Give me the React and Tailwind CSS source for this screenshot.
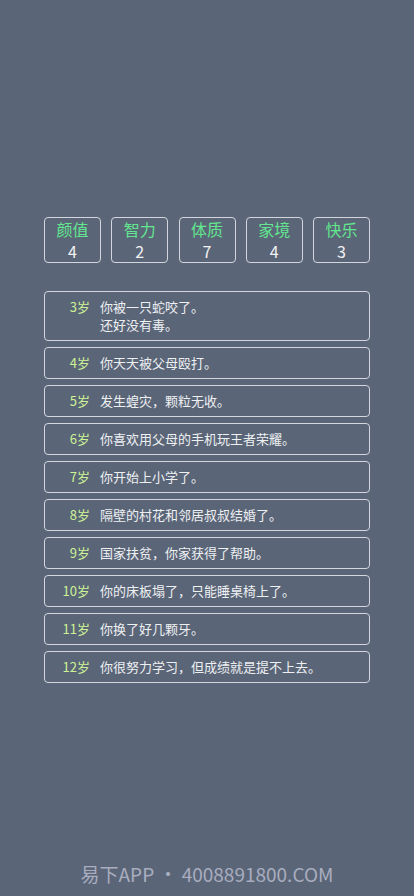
import React from 'react';

const stats = [
  { label: '颜值', value: 4 },
  { label: '智力', value: 2 },
  { label: '体质', value: 7 },
  { label: '家境', value: 4 },
  { label: '快乐', value: 3 },
];

const events = [
  { age: 3, lines: ['你被一只蛇咬了。', '还好没有毒。'] },
  { age: 4, lines: ['你天天被父母殴打。'] },
  { age: 5, lines: ['发生蝗灾，颗粒无收。'] },
  { age: 6, lines: ['你喜欢用父母的手机玩王者荣耀。'] },
  { age: 7, lines: ['你开始上小学了。'] },
  { age: 8, lines: ['隔壁的村花和邻居叔叔结婚了。'] },
  { age: 9, lines: ['国家扶贫，你家获得了帮助。'] },
  { age: 10, lines: ['你的床板塌了，只能睡桌椅上了。'] },
  { age: 11, lines: ['你换了好几颗牙。'] },
  { age: 12, lines: ['你很努力学习，但成绩就是提不上去。'] },
];

export default function App() {
  return (
    <div
      className="w-[414px] h-[896px] bg-[#5a6578] flex flex-col overflow-hidden"
      style={{ fontFamily: '"Noto Sans CJK SC", "Noto Sans", sans-serif' }}
    >
      <div className="pt-[217px] px-[44px] flex justify-between">
        {stats.map((s) => (
          <div
            key={s.label}
            className="w-[57px] h-[46px] border border-[#d3d7dd] rounded-[4px] flex flex-col items-center"
          >
            <span className="text-[16px] leading-[22px] text-[#62e68e]">{s.label}</span>
            <span className="text-[16px] leading-[22px] text-[#f2f2f2]">{s.value}</span>
          </div>
        ))}
      </div>

      <div className="mt-[28px] px-[44px] flex flex-col gap-[6px]">
        {events.map((e) => (
          <div
            key={e.age}
            className="border border-[#d3d7dd] rounded-[4px] py-[6px] flex text-[13px] leading-[18px]"
          >
            <span className="w-[45px] shrink-0 text-right text-[#cdf295]">{e.age}岁</span>
            <div className="ml-[10px] flex flex-col text-[#eef0f2]">
              {e.lines.map((l) => (
                <span key={l}>{l}</span>
              ))}
            </div>
          </div>
        ))}
      </div>

      <div className="mt-auto pb-[10px] text-center text-[19px] leading-[24px] text-[#a9adbf]">
        易下APP • 4008891800.COM
      </div>
    </div>
  );
}
